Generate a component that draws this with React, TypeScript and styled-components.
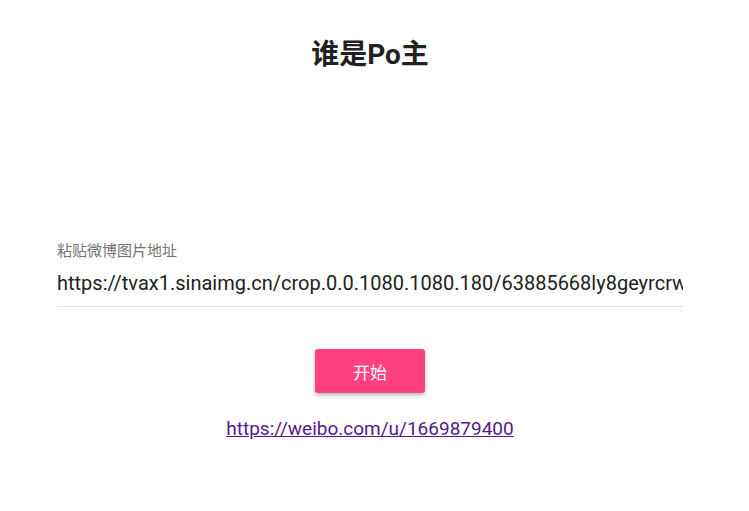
import styled, { createGlobalStyle } from 'styled-components';

const GlobalStyle = createGlobalStyle`
  body {
    margin: 0;
    background: #fff;
    font-family: Roboto, "Noto Sans CJK SC", sans-serif;
  }
`;

const Page = styled.div`
  width: 740px;
  display: flex;
  flex-direction: column;
  align-items: center;
`;

const Title = styled.h1`
  margin: 38px 0 0;
  height: 34px;
  line-height: 34px;
  font-size: 28px;
  font-weight: 700;
  color: #212121;
`;

const Field = styled.div`
  margin-top: 170px;
  width: 626px;
  display: flex;
  flex-direction: column;
`;

const Label = styled.label`
  font-size: 15px;
  line-height: 18px;
  color: #757575;
`;

const Input = styled.input`
  margin-top: 9px;
  border: none;
  border-bottom: 1px solid #e0e0e0;
  outline: none;
  padding: 0 0 9px;
  font-family: Roboto, "Noto Sans CJK SC", sans-serif;
  font-size: 20px;
  line-height: 28px;
  color: #212121;
  background: transparent;
`;

const StartButton = styled.button`
  margin-top: 42px;
  width: 110px;
  height: 44px;
  border: none;
  border-radius: 3px;
  background: #ff4081;
  color: #fff;
  font-family: Roboto, "Noto Sans CJK SC", sans-serif;
  font-size: 17px;
  box-shadow: 0 2px 4px rgba(0, 0, 0, 0.3);
  cursor: pointer;
`;

const ProfileLink = styled.a`
  margin-top: 24px;
  font-size: 19px;
  line-height: 24px;
  color: #551a8b;
`;

export default function App() {
  return (
    <>
      <GlobalStyle />
      <Page>
        <Title>谁是Po主</Title>
        <Field>
          <Label>粘贴微博图片地址</Label>
          <Input
            readOnly
            value="https://tvax1.sinaimg.cn/crop.0.0.1080.1080.180/63885668ly8geyrcrwj20u00u0.jpg"
          />
        </Field>
        <StartButton>开始</StartButton>
        <ProfileLink href="#">https://weibo.com/u/1669879400</ProfileLink>
      </Page>
    </>
  );
}
